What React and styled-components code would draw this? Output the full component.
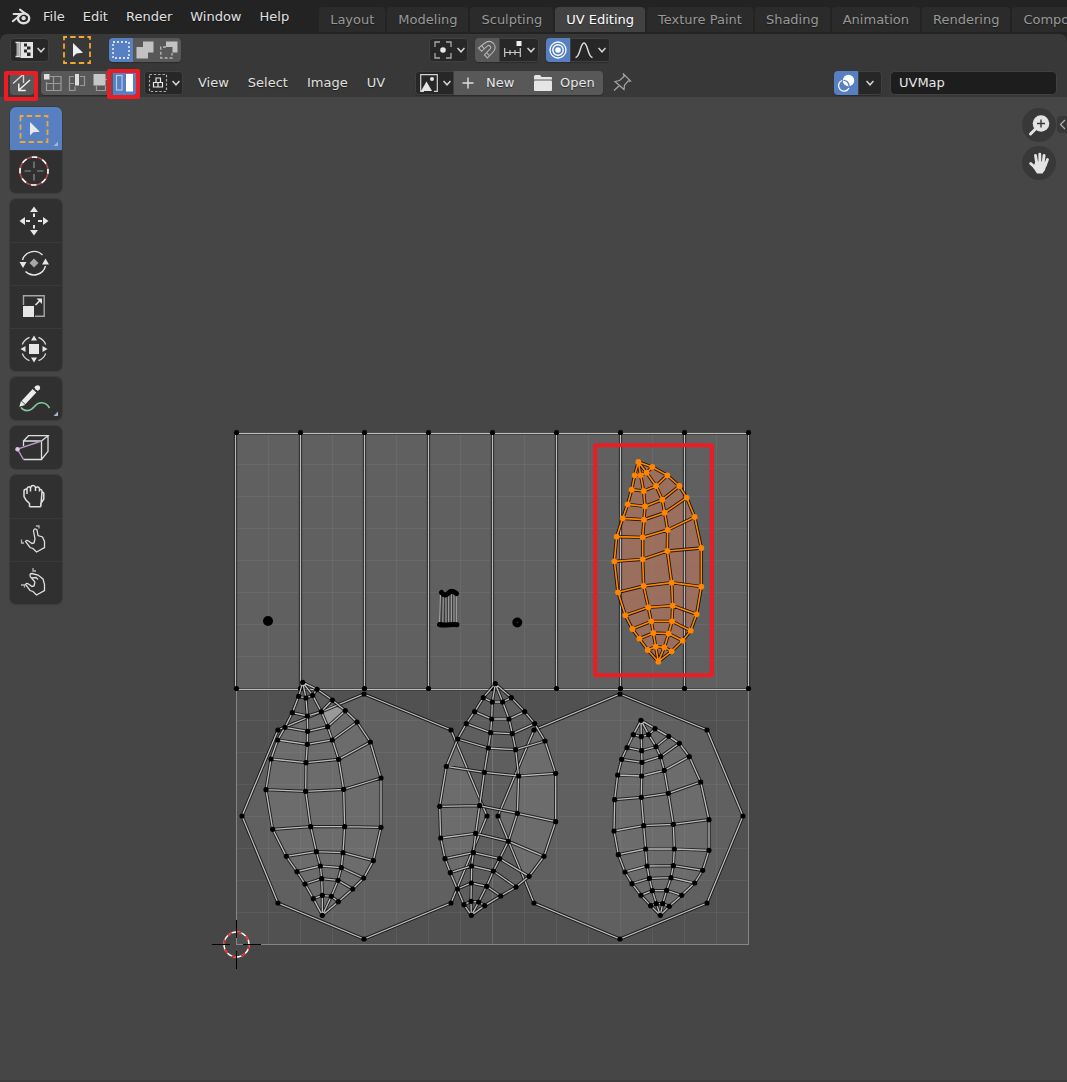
import React from 'react';
import styled, { createGlobalStyle } from 'styled-components';

const GlobalStyle = createGlobalStyle`
  *, *::before, *::after { box-sizing: border-box; }
  html, body { margin: 0; background: #464646; }
  body, button, input {
    font-family: 'DejaVu Sans', Verdana, sans-serif;
    font-size: 13px;
    line-height: 16px;
  }
  svg { display: block; flex: none; }
`;

const Window = styled.div`
  display: flex;
  flex-direction: column;
  height: 100vh;
  overflow: hidden;
  background: #232323;
  color: #e0e0e0;
`;

/* ---------- application bar ---------- */

const TopBar = styled.header`
  display: flex;
  flex: none;
  height: 34px;
  padding: 0 0 2px 11px;
  overflow: hidden;
`;

const PlainButton = styled.button`
  display: flex;
  align-items: center;
  flex: none;
  padding: 0;
  border: 0;
  background: none;
  color: #e0e0e0;
  white-space: nowrap;
  text-shadow: 0 1px 1px rgba(0, 0, 0, 0.5);
`;

const AppMenu = styled.nav`
  display: flex;
  flex: none;
  gap: 18px;
  padding-top: 2px;
`;

const LogoButton = styled(PlainButton)`
  margin-right: 12px;
`;

const Tabs = styled.nav`
  display: flex;
  align-items: flex-end;
  flex: none;
  gap: 2px;
  margin-left: 30px;
`;

const Tab = styled.button`
  flex: none;
  height: 25px;
  padding: 0 11px;
  border: 0;
  border-radius: 4px 4px 0 0;
  background: ${(p) => (p.$active ? '#424242' : '#2b2b2b')};
  color: ${(p) => (p.$active ? '#ffffff' : '#989898')};
  white-space: nowrap;
  text-shadow: 0 1px 1px rgba(0, 0, 0, 0.4);
`;

/* ---------- editor header ---------- */

const EditorHeader = styled.div`
  flex: none;
  border-radius: 7px 7px 0 0;
  background: #383838;
`;

const HeaderRow = styled.div`
  display: flex;
  align-items: center;
  height: ${(p) => (p.$lower ? 31 : 32)}px;
  padding: ${(p) => (p.$lower ? 2 : 0)}px 10px 0;
`;

const Spacer = styled.div`
  flex: ${(p) => p.$grow || 1};
`;

const Cluster = styled.div`
  display: flex;
  align-items: center;
  flex: none;
  gap: ${(p) => p.$gap || 7}px;
`;

const Joined = styled.div`
  display: flex;
  flex: none;
  border-radius: 4px;
  box-shadow: 0 1px 1px rgba(0, 0, 0, 0.25);
  & > *:first-child { border-radius: 4px 0 0 4px; }
  & > *:last-child { border-radius: 0 4px 4px 0; }
  & > *:not(:first-child):not(:last-child) { border-radius: 0; }
  & > * + * { border-left: 1px solid #3b3b3b; }
`;

const tones = { dark: '#272727', grey: '#585858', blue: '#5680c2' };

const ToolButton = styled.button`
  position: relative;
  display: flex;
  align-items: center;
  justify-content: center;
  gap: 4px;
  flex: none;
  width: ${(p) => p.$width || 24}px;
  height: 24px;
  padding: 0;
  border: 0;
  border-radius: 4px;
  background: ${(p) => tones[p.$tone || 'grey']};
  box-shadow: ${(p) => (p.$tone === 'dark' ? 'inset 0 0 0 1px #404040' : 'none')};
  color: #e6e6e6;
  text-shadow: 0 1px 1px rgba(0, 0, 0, 0.5);
`;

const LabelButton = styled(ToolButton)`
  justify-content: flex-start;
  gap: ${(p) => p.$gap}px;
  padding-left: ${(p) => p.$pad}px;
`;

const ActiveTool = styled(PlainButton)`
  margin: 0 11px 0 7px;
`;

const HeaderMenu = styled.nav`
  display: flex;
  gap: 19px;
  margin: 0 30px 0 15px;
`;

const PinButton = styled(PlainButton)`
  margin-left: 10px;
`;

const LayerField = styled.input`
  width: 167px;
  height: 24px;
  margin-left: 8px;
  padding: 0 8px 1px;
  border: 1px solid #404040;
  border-radius: 5px;
  background: #1d1d1d;
  color: #e6e6e6;
  outline: 0;
`;

const Highlight = styled.span`
  position: absolute;
  inset: ${(p) => p.$inset};
  z-index: 1;
  border: 4px solid #ed1c24;
  border-radius: 2px;
  pointer-events: none;
`;

/* ---------- viewport ---------- */

const Viewport = styled.main`
  display: grid;
  grid-template: minmax(0, 1fr) / auto 1fr auto;
  flex: 1;
  min-height: 0;
  background: #464646;
  border-bottom: 2px solid #3d3d3d;
`;

const Drawing = styled.svg`
  grid-area: 1 / 1 / 2 / 4;
  width: 100%;
  height: 100%;
`;

const Shelf = styled.aside`
  grid-area: 1 / 1;
  display: flex;
  flex-direction: column;
  gap: 6px;
  padding: 10px;
  z-index: 1;
`;

const ShelfGroup = styled.div`
  display: flex;
  flex-direction: column;
  border-radius: 6px;
  overflow: hidden;
  box-shadow: 0 0 0 1px #3c3c3c;
`;

const ShelfButton = styled.button`
  width: 52px;
  height: 43px;
  padding: 0;
  border: 0;
  background: ${(p) => (p.$active ? '#5680c2' : '#303030')};
  & + & { box-shadow: inset 0 1px 0 #3a3a3a; }
`;

const Gizmos = styled.aside`
  grid-area: 1 / 3;
  display: flex;
  align-items: flex-start;
  gap: 1px;
  padding-top: 11px;
  z-index: 1;
`;

const GizmoColumn = styled.div`
  display: flex;
  flex-direction: column;
  gap: 4px;
`;

const RoundButton = styled.button`
  width: 34px;
  height: 34px;
  padding: 0;
  border: 0;
  border-radius: 50%;
  background: #383838;
`;

const SidebarTab = styled.button`
  width: 10px;
  height: 17px;
  margin-top: 8px;
  padding: 0;
  border: 0;
  border-radius: 4px 0 0 4px;
  background: #383838;
`;

/* ---------- header icons ---------- */

const Glyph = ({ w = 20, h = 20, children }) => (
  <svg width={w} height={h} viewBox={`0 0 ${w} ${h}`} fill="none" stroke="none" aria-hidden="true">
    {children}
  </svg>
);

const BlenderIcon = () => (
  <Glyph>
    <g stroke="#dedede" strokeWidth="2" strokeLinecap="round" strokeLinejoin="round">
      <path d="M9 3.600 16 8.800M2.600 8H12M1.800 15.200 10.500 8.300" />
      <ellipse cx="12.600" cy="12.300" rx="5.600" ry="4.900" strokeWidth="2.400" />
    </g>
    <circle cx="12.600" cy="12.200" r="2.100" fill="#dedede" />
  </Glyph>
);

const Chevron = () => (
  <Glyph w={8} h={6}>
    <path d="M0.5 1 4 4.800 7.500 1" stroke="#d6d6d6" strokeWidth="1.500" />
  </Glyph>
);

const UVEditorIcon = () => (
  <Glyph w={18} h={18}>
    <path d="M0.5 1.500h4v14h-4M0.5 15.500h5" stroke="#ddd" strokeWidth="1.3" />
    <path d="M1.500 2h3v13h-3z" fill="#aaa" />
    <rect x="5.5" y="1" width="12.500" height="16" fill="#e3e3e3" />
    <path d="M9 2.5h3v3H9zM12 5.5h3.5v3H12zM9 8.5h3v3H9zM12 11.5h3.5v3.5H12z" fill="#272727" />
  </Glyph>
);

const ActiveToolIcon = () => (
  <Glyph w={28} h={28}>
    <rect x="1" y="1" width="26" height="26" stroke="#f0a830" strokeWidth="1.8" strokeDasharray="5.4 3.2" strokeDashoffset="2.4" />
    <path d="M10 7v14l3.4-3.6 6.6-.6z" fill="#f0f0f0" />
  </Glyph>
);

const SelectNewIcon = () => (
  <Glyph>
    <rect x="2" y="2" width="16" height="16" stroke="#fff" strokeWidth="1.3" strokeDasharray="2 2" />
  </Glyph>
);

const SelectExtendIcon = () => (
  <Glyph><path d="M8 1.5h10.5v11H13v6H1.5V7H8z" fill="#c2c2c2" /></Glyph>
);

const SelectSubtractIcon = () => (
  <Glyph>
    <path d="M7 1.5h11.5v11h-5V7H7z" fill="#c2c2c2" />
    <path d="M7 7H1.8v11H13v-5" stroke="#b5b5b5" strokeWidth="1.4" strokeDasharray="3 2" />
  </Glyph>
);

const PivotIcon = () => (
  <Glyph>
    <path d="M2 7V2h5M13 2h5v5M18 13v5h-5M7 18H2v-5" stroke="#aaa" strokeWidth="1.3" />
    <circle cx="10" cy="10" r="2.8" fill="#e8e8e8" />
  </Glyph>
);

const MagnetIcon = () => (
  <Glyph>
    <path d="M1.500 8 7.600 3.200c3-2.300 6.600-2 8.900.3 2.300 2.700 1.900 6-.6 8.700l-5.400 5.800-3.100-3.100 5.500-5.700c1.200-1.300 1-2.400.3-3.100-.8-.8-2-.8-3 .1L4.600 11.300z" stroke="#b4b4b4" strokeWidth="1.100" />
    <path d="M4.600 5.600 7.400 8.800M9.500 12.700l3 3" stroke="#b4b4b4" strokeWidth="1.100" />
  </Glyph>
);

const IncrementIcon = () => (
  <Glyph>
    <path d="M1.700 8v9M17.300 8v9M1.700 12.500h15.600M7 10v5M12 10v5" stroke="#c8c8c8" strokeWidth="1.200" />
    <rect x="13.500" y="1" width="5" height="5" fill="#eee" />
  </Glyph>
);

const ProportionalIcon = () => (
  <Glyph>
    <circle cx="10" cy="10" r="2.800" fill="#fff" />
    <circle cx="10" cy="10" r="5.200" stroke="#fff" strokeWidth="1.400" />
    <circle cx="10" cy="10" r="8" stroke="#fff" strokeWidth="1.300" />
  </Glyph>
);

const FalloffIcon = () => (
  <Glyph><path d="M1.500 17.500C6.500 17 6 3 10 3s3.500 14 8.500 14.500" stroke="#e0e0e0" strokeWidth="1.400" /></Glyph>
);

const SyncIcon = () => (
  <Glyph w={24} h={24}>
    <path d="M3 12.500 13 3.500M13.500 12V3" stroke="#d6d6d6" strokeWidth="1.400" />
    <path d="M20 9 9 19M8.800 12.500v7h7" stroke="#f0f0f0" strokeWidth="1.500" />
  </Glyph>
);

const VertexIcon = () => (
  <Glyph>
    <path d="M7 3.500h11v14H3.500V9M10.500 3.500v14M3.500 10.500H18" stroke="#9a9a9a" strokeWidth="1.200" />
    <rect x="1" y="1" width="5.500" height="5.500" fill="#dedede" />
  </Glyph>
);

const EdgeIcon = () => (
  <Glyph>
    <path d="M7 3.500H2.500v14h5.500v-4M13 3.500h4.500v9H13M2.500 10.500H7" stroke="#9a9a9a" strokeWidth="1.200" />
    <rect x="8" y="1" width="4" height="11.500" fill="#dedede" />
  </Glyph>
);

const FaceIcon = () => (
  <Glyph>
    <path d="M5.500 13v4.500h9V13M14 6.500h5v6" stroke="#9a9a9a" strokeWidth="1.200" />
    <rect x="2.500" y="1" width="12" height="11.500" fill="#c6c6c6" />
  </Glyph>
);

const IslandIcon = () => (
  <Glyph>
    <rect x="1.500" y="2.500" width="5.500" height="14.500" stroke="#b7c9ec" strokeWidth="1.200" />
    <rect x="11" y="1" width="7" height="17.500" fill="#fff" />
  </Glyph>
);

const StickyIcon = () => (
  <Glyph>
    <rect x="1.500" y="1.500" width="17" height="17" stroke="#aaa" strokeWidth="1.200" strokeDasharray="2.500 1.800" />
    <path d="M8 5h4.500v4.500H8zM5.500 9.500H10V14H5.500zM10 9.500h4.500V14H10z" stroke="#e6e6e6" strokeWidth="1.200" />
  </Glyph>
);

const ImageIcon = () => (
  <Glyph>
    <path d="M18.300 6v12.300H15M5 18.300H1.700V1.700h16.600V6" stroke="#d2d2d2" strokeWidth="1.200" />
    <path d="M2 18 7.500 8.500 13 18z" fill="#e6e6e6" />
    <circle cx="13" cy="6" r="2" fill="#e6e6e6" />
  </Glyph>
);

const PlusIcon = () => (
  <Glyph w={12} h={12}><path d="M6 0.500v11M0.500 6h11" stroke="#e0e0e0" strokeWidth="1.400" /></Glyph>
);

const FolderIcon = () => (
  <Glyph w={18} h={18}>
    <path d="M0 5.500V2.500Q0 1 1.500 1H6l1.500 2H17q1 0 1 1v1.500z" fill="#e6e6e6" />
    <rect y="6.500" width="18" height="10.500" rx="1" fill="#e6e6e6" />
  </Glyph>
);

const PinIcon = () => (
  <Glyph w={19} h={19}>
    <path d="M1 17.500 6.500 12.500M2 8.500l4.500-1L11 3.500 10.500 1l7 7-2.500.200-3.500 4L11 16.500z" stroke="#a6a6a6" strokeWidth="1.200" />
  </Glyph>
);

const OverlayIcon = () => (
  <Glyph>
    <circle cx="12.500" cy="7.500" r="5.700" fill="#fff" />
    <path d="M6 7.500A5.500 5.500 0 1 0 13 15" stroke="#fff" strokeWidth="1.300" />
    <path d="M7.500 7.300A5.500 5.500 0 0 1 13 13" stroke="#5680c2" strokeWidth="1.300" />
  </Glyph>
);

/* ---------- shelf icons ---------- */

const ShelfGlyph = ({ children }) => (
  <svg width="52" height="43" viewBox="0 0 52 43" fill="none" aria-hidden="true">{children}</svg>
);

const Corner = () => <path d="M43.500 39H48v-4.500z" fill="#a9b4c6" />;

const shelfIcons = {
  'Select Box': (
    <>
      <rect x="10.500" y="9" width="27" height="26" stroke="#f0a830" strokeWidth="1.800" strokeDasharray="5.400 3.200" strokeDashoffset="2.400" />
      <path d="M20 15v13.500l3.300-3.200 6.500-.5z" fill="#e8e8e8" />
      <Corner />
    </>
  ),
  Cursor: (
    <>
      <circle cx="24" cy="21" r="14" stroke="#ad4a4e" strokeWidth="1.600" />
      <circle cx="24" cy="21" r="14" stroke="#fff" strokeWidth="1.600" strokeDasharray="5.500 5.500" strokeDashoffset="2.700" />
      <path d="M14.500 21h6.500M27 21h6.500M24 11.500V18M24 24v6.500" stroke="#8f8f8f" strokeWidth="1.200" />
    </>
  ),
  Move: (
    <>
      <path d="M24 7.500l4 5.500h-8zM24 36.500l4-5.500h-8zM9.500 22l5.500-4v8zM38.500 22 33 18v8z" fill="#e6e6e6" />
      <path d="M24 14.500V18M24 26v3.500M16 22h4M28 22h4" stroke="#e6e6e6" strokeWidth="2" />
    </>
  ),
  Rotate: (
    <>
      <path d="M12.500 18A12 12 0 0 1 32.500 13M35.500 24A12 12 0 0 1 15.500 29.500" stroke="#e6e6e6" strokeWidth="1.400" />
      <path d="M9.500 20h7L13 26zM32 22.500h7l-3.500-6z" fill="#e6e6e6" />
      <path d="M24 16.500l4.500 4.500-4.500 4.500-4.500-4.500z" fill="#a8a8a8" />
    </>
  ),
  Scale: (
    <>
      <path d="M13.500 20v-9.300h20.700v20.600H25" stroke="#a6a6a6" strokeWidth="1.400" />
      <rect x="13" y="21" width="11" height="11" fill="#e6e6e6" />
      <path d="M25.500 20l4-4" stroke="#e6e6e6" strokeWidth="1.600" />
      <path d="M26.500 13.500H32V19z" fill="#e6e6e6" />
    </>
  ),
  Transform: (
    <>
      <path d="M28.500 9.300A12.500 12.500 0 0 1 35.700 16.500M35.700 25.500A12.500 12.500 0 0 1 28.500 32.700M19.500 32.700A12.500 12.500 0 0 1 12.300 25.500M12.300 16.500A12.500 12.500 0 0 1 19.500 9.300" stroke="#d8d8d8" strokeWidth="1.300" />
      <rect x="19" y="16" width="10" height="10" fill="#e6e6e6" />
      <path d="M24 7.500l3 5h-6zM24 34.500l3-5h-6zM10.500 21l5-3v6zM37.500 21l-5-3v6z" fill="#e6e6e6" />
    </>
  ),
  Annotate: (
    <>
      <path d="M13.500 25.500 24.500 13.700" stroke="#ececec" strokeWidth="5" />
      <path d="M26 12.200l1.400-1.500" stroke="#ececec" strokeWidth="5" />
      <circle cx="27.600" cy="10.700" r="2.500" fill="#ececec" />
      <path d="M9.300 29.800l1.700-5.800 4.200 4z" fill="#ececec" />
      <path d="M11 30.500c3.500 4.500 9.500 4 13.500-1s11-5.500 15 1.500" stroke="#7fcb9d" strokeWidth="1.600" />
      <Corner />
    </>
  ),
  'Rip Region': (
    <>
      <path d="M13.500 20v-5h18v18.500h-18M13.500 15l5-5.300H38l-6.500 5.300M38 9.700v15.600l-6.500 8.200" stroke="#dedede" strokeWidth="1.300" />
      <path d="M13.500 33.500 7.500 23.200 31.500 15" stroke="#b596c4" strokeWidth="1.400" />
      <circle cx="7.500" cy="23.200" r="2.200" fill="#dcc3ea" />
    </>
  ),
  Grab: (
    <path d="M19.500 31.700V28.500l-3.500-3.500-2-3.500V16q0-2 3-2M17 19v-5.500q.500-1.800 3-1.800M20.500 16.500V13q.500-2.500 2.500-2.500t2.500 2v3.500M25.500 12.500q3-1.500 4 1v3M29.500 14.500q2.500-.5 2.500 2v2M32 17q1.800 0 1.800 2V24l-3 4.500v3.200z M19.500 31.700h11.300" stroke="#e0e0e0" strokeWidth="1.500" />
  ),
  Relax: (
    <>
      <path d="M25 21l-1.500-8q.500-3.500 3.500-1l1 5.500 4.500 1.500 2 4.500v6L26.500 34l-3.500-3.500-3-1-4.500-6q1-2 3-.5l3.500 2.500 2-.500L25 21" stroke="#dedede" strokeWidth="1.300" />
      <path d="M26 8h3v2.500M11.500 21.500V25H14" stroke="#b5b5b5" strokeWidth="1.300" />
    </>
  ),
  Pinch: (
    <>
      <path d="M25 21l-4.500-5q-1.500-3.500 1.500-3.500l6 1.500 5 4 1.500 5.500v6L26.500 34l-3.500-3.500-3-1-4.500-6q1-2 3-.5l3.500 2.500 2-.500L25 21M22 17l4-.5 2 2" stroke="#dedede" strokeWidth="1.300" />
      <path d="M23 7v3h3M11 24h3.500v2.500" stroke="#b5b5b5" strokeWidth="1.300" />
    </>
  ),
};

const shelfGroups = [
  ['Select Box', 'Cursor'],
  ['Move', 'Rotate', 'Scale', 'Transform'],
  ['Annotate'],
  ['Rip Region'],
  ['Grab', 'Relax', 'Pinch'],
];

/* ---------- UV layout data ---------- */

// Every island is a strip of rings between two poles; its points count in thirds of a pixel from `at`.
const leaves = [
  {
    at: [220, 670], top: [248, 37], bottom: [307, 736],
    rings: [
      [[236, 79], [258, 84], [278, 76], [291, 58]],
      [[217, 128], [262, 138], [304, 125], [337, 90]],
      [[195, 172], [263, 184], [323, 170], [376, 122]],
      [[173, 210], [262, 223], [337, 210], [411, 156]],
      [[153, 267], [258, 278], [356, 268], [451, 216]],
      [[138, 359], [257, 364], [371, 358], [483, 324]],
      [[158, 478], [272, 470], [374, 470], [483, 472]],
      [[199, 559], [289, 545], [369, 548], [460, 572]],
      [[231, 605], [301, 588], [364, 593], [431, 624]],
      [[255, 642], [305, 626], [354, 631], [398, 657]],
      [[280, 686], [307, 676], [334, 679], [355, 695]],
    ],
  },
  {
    at: [420, 670], top: [226, 41], bottom: [154, 736],
    rings: [
      [[190, 83], [217, 96], [248, 96], [274, 83]],
      [[164, 125], [215, 147], [267, 147], [314, 125]],
      [[139, 161], [212, 188], [277, 191], [344, 161]],
      [[113, 207], [205, 234], [287, 239], [375, 213]],
      [[79, 289], [193, 307], [296, 318], [407, 310]],
      [[59, 409], [179, 407], [292, 430], [407, 455]],
      [[62, 504], [167, 490], [265, 514], [372, 559]],
      [[75, 566], [160, 548], [239, 566], [327, 619]],
      [[91, 608], [155, 588], [220, 603], [288, 651]],
      [[112, 657], [154, 639], [200, 649], [242, 678]],
      [[132, 704], [153, 694], [176, 696], [194, 707]],
    ],
  },
  {
    at: [590, 680], top: [153, 121], bottom: [211, 706],
    rings: [
      [[130, 164], [154, 170], [176, 164], [195, 146]],
      [[111, 203], [155, 212], [198, 200], [236, 169]],
      [[95, 238], [156, 247], [212, 230], [268, 190]],
      [[83, 285], [155, 288], [223, 271], [298, 230]],
      [[74, 359], [154, 352], [235, 340], [332, 306]],
      [[72, 453], [161, 437], [250, 433], [357, 419]],
      [[85, 524], [167, 507], [253, 507], [357, 511]],
      [[105, 576], [171, 558], [250, 557], [338, 571]],
      [[126, 611], [178, 595], [243, 593], [314, 609]],
      [[153, 646], [187, 632], [230, 631], [275, 646]],
      [[182, 677], [199, 671], [218, 671], [238, 679]],
    ],
  },
  {
    at: [590, 430], top: [145, 96], bottom: [205, 695], selected: true,
    rings: [
      [[134, 136], [152, 136], [170, 128], [187, 111]],
      [[125, 179], [161, 183], [198, 168], [232, 136]],
      [[113, 223], [165, 229], [217, 209], [268, 168]],
      [[98, 265], [162, 269], [224, 248], [290, 203]],
      [[80, 320], [158, 322], [233, 300], [314, 261]],
      [[73, 394], [158, 388], [232, 363], [334, 354]],
      [[84, 487], [161, 468], [245, 458], [334, 470]],
      [[106, 556], [175, 532], [248, 527], [320, 553]],
      [[127, 597], [184, 574], [246, 574], [302, 602]],
      [[148, 626], [190, 609], [236, 611], [278, 632]],
      [[173, 660], [197, 650], [223, 652], [245, 664]],
    ],
  },
];

const octagons = [364, 620].map((cx) => [
  [cx, 694], [cx + 87, 730], [cx + 123, 816], [cx + 87, 903],
  [cx, 939], [cx - 86, 903], [cx - 122, 816], [cx - 86, 730],
]);

const path = (points, close) => `M${points.map((p) => p.join(' ')).join('L')}${close ? 'Z' : ''}`;

const place = (leaf) => {
  const move = ([x, y]) => [leaf.at[0] + x / 3, leaf.at[1] + y / 3];
  const rings = leaf.rings.map((ring) => ring.map(move));
  const top = move(leaf.top);
  const bottom = move(leaf.bottom);
  const columns = [0, 1, 2, 3].map((i) => [top, ...rings.map((r) => r[i]), bottom]);
  return { selected: leaf.selected, rings, top, bottom, columns };
};

const placed = leaves.map(place);

const Edges = ({ d, selected }) => (
  <g fill="none">
    <path d={d} stroke="#000" strokeOpacity={selected ? 0.8 : 0.7} strokeWidth={selected ? 3.4 : 3.2} />
    <path d={d} stroke={selected ? '#ff8500' : '#bcbcbc'} strokeWidth={selected ? 1.6 : 1.3} />
  </g>
);

const Vertices = ({ points, selected }) =>
  points.map(([x, y], i) => <circle key={i} cx={x} cy={y} r={selected ? 2.9 : 2.6} fill={selected ? '#ff8500' : '#000'} />);

const LeafFace = ({ leaf }) => (
  <path
    d={path([...leaf.columns[0], ...leaf.columns[3].slice().reverse()], true)}
    fill={leaf.selected ? '#b9765d' : '#fff'}
    fillOpacity={leaf.selected ? 0.66 : 0.08}
  />
);

const LeafWire = ({ leaf }) => (
  <g>
    <Edges selected={leaf.selected} d={[...leaf.columns, ...leaf.rings].map((l) => path(l)).join('')} />
    <Vertices selected={leaf.selected} points={[leaf.top, ...leaf.rings.flat(), leaf.bottom]} />
  </g>
);

const columnsX = [0, 1, 2, 3, 4, 5, 6, 7, 8].map((i) => 236 + i * 64);
const gridSteps = Array.from({ length: 15 }, (_, i) => i + 1);

const UVCanvas = () => (
  <Drawing role="img" aria-label="UV layout">
    <g transform="translate(0 -97)">
      <rect x="236.500" y="432.500" width="512" height="512" fill="#515151" stroke="#858585" />
      <rect x="236" y="433" width="512" height="256" fill="#606060" />
      {octagons.map((o, i) => <path key={i} d={path(o, true)} fill="#606060" />)}
      {gridSteps.map((i) => (
        <path
          key={i}
          d={`M${236.5 + i * 32} 433V944M237 ${432.5 + i * 32}H748`}
          stroke="#fff"
          strokeOpacity={i % 8 === 0 ? 0.14 : 0.055}
        />
      ))}
      {placed.map((leaf, i) => <LeafFace key={i} leaf={leaf} />)}
      <path d="M321.500 711.500 332 705l13.500 6-18 15.500z" fill="#999" />

      <Edges d={columnsX.map((x) => `M${x === 236 ? 235.5 : x + 0.5} 433V689`).join('') + 'M236 433.500H748M236 689.500H748'} />
      <Vertices points={columnsX.flatMap((x) => [[x + 0.5, 432.5], [x + 0.5, 688.5]])} />
      {octagons.map((o, i) => (
        <g key={i}>
          <Edges d={path(o, true)} />
          <Vertices points={o} />
        </g>
      ))}
      {placed.map((leaf, i) => <LeafWire key={i} leaf={leaf} />)}

      <circle cx="268" cy="621" r="5" fill="#000" />
      <circle cx="517.300" cy="622.500" r="5" fill="#000" />
      <circle cx="517.300" cy="622.500" r="0.700" fill="#444" />
      <path d="M440 592h17v32h-18z" fill="#3c3c3c" />
      <path d="M440.500 594l-1 30M443.300 594l-.5 30M446 594v30M448.700 594v30M451.300 594v30M454 594v30M456.300 594v30" stroke="#aaa" strokeWidth="1.100" />
      <path d="M441.500 592.500c3 4 5 2.500 7 .500s4.500-2.500 8 .500M439.500 624.500c5 1.500 12-.500 17.500.200" stroke="#000" strokeWidth="5" strokeLinecap="round" fill="none" />

      <rect x="595.300" y="445.300" width="116.500" height="230" fill="none" stroke="#ed1c24" strokeWidth="4" strokeLinejoin="round" />

      <circle cx="236.500" cy="944.500" r="12.500" fill="none" stroke="#fff" strokeWidth="1.500" />
      <circle cx="236.500" cy="944.500" r="12.500" fill="none" stroke="#f01c1c" strokeWidth="1.500" strokeDasharray="4.900 4.900" />
      <path d="M212 944.500h18M243 944.500h18M236.500 920v18M236.500 951v18" stroke="#000" />
    </g>
  </Drawing>
);

/* ---------- page ---------- */

const appMenus = ['File', 'Edit', 'Render', 'Window', 'Help'];
const workspaces = ['Layout', 'Modeling', 'Sculpting', 'UV Editing', 'Texture Paint', 'Shading', 'Animation', 'Rendering', 'Compositing'];
const editorMenus = ['View', 'Select', 'Image', 'UV'];

const IconMenu = ({ label, icon, width = 39 }) => (
  <ToolButton $tone="dark" $width={width} aria-label={label} aria-haspopup="menu">
    {icon}
    <Chevron />
  </ToolButton>
);

export default function App() {
  return (
    <>
      <GlobalStyle />
      <Window>
        <TopBar>
          <LogoButton aria-label="Blender"><BlenderIcon /></LogoButton>
          <AppMenu aria-label="Application">
            {appMenus.map((m) => <PlainButton key={m}>{m}</PlainButton>)}
          </AppMenu>
          <Tabs aria-label="Workspaces">
            {workspaces.map((w) => <Tab key={w} $active={w === 'UV Editing'}>{w}</Tab>)}
          </Tabs>
        </TopBar>

        <EditorHeader>
          <HeaderRow>
            <Cluster>
              <IconMenu label="Editor type" icon={<UVEditorIcon />} />
              <ActiveTool aria-label="Active tool"><ActiveToolIcon /></ActiveTool>
              <Joined>
                <ToolButton $tone="blue" aria-label="New selection"><SelectNewIcon /></ToolButton>
                <ToolButton aria-label="Extend selection"><SelectExtendIcon /></ToolButton>
                <ToolButton aria-label="Subtract selection"><SelectSubtractIcon /></ToolButton>
              </Joined>
            </Cluster>
            <Spacer $grow={5} />
            <Cluster>
              <IconMenu label="Pivot point" icon={<PivotIcon />} />
              <Joined>
                <ToolButton aria-label="Snap"><MagnetIcon /></ToolButton>
                <IconMenu label="Snap to" width={40} icon={<IncrementIcon />} />
              </Joined>
              <Joined>
                <ToolButton $tone="blue" aria-label="Proportional editing"><ProportionalIcon /></ToolButton>
                <IconMenu label="Falloff" width={40} icon={<FalloffIcon />} />
              </Joined>
            </Cluster>
            <Spacer $grow={9} />
          </HeaderRow>

          <HeaderRow $lower>
            <Cluster>
              <ToolButton aria-label="Sync selection">
                <SyncIcon />
                <Highlight $inset="0 -4px -6px -6px" />
              </ToolButton>
              <Joined>
                <ToolButton aria-label="Vertex"><VertexIcon /></ToolButton>
                <ToolButton aria-label="Edge"><EdgeIcon /></ToolButton>
                <ToolButton aria-label="Face"><FaceIcon /></ToolButton>
                <ToolButton $tone="blue" aria-label="Island">
                  <IslandIcon />
                  <Highlight $inset="-2px -3px -4px -6px" />
                </ToolButton>
              </Joined>
              <IconMenu label="Sticky selection" icon={<StickyIcon />} />
            </Cluster>
            <HeaderMenu aria-label="Editor">
              {editorMenus.map((m) => <PlainButton key={m}>{m}</PlainButton>)}
            </HeaderMenu>
            <Joined>
              <IconMenu label="Browse image" icon={<ImageIcon />} />
              <LabelButton $width={74} $pad={8} $gap={12}><PlusIcon />New</LabelButton>
              <LabelButton $width={75} $pad={6} $gap={8}><FolderIcon />Open</LabelButton>
            </Joined>
            <PinButton aria-label="Pin"><PinIcon /></PinButton>
            <Spacer />
            <Joined>
              <ToolButton $tone="blue" aria-label="Show overlays"><OverlayIcon /></ToolButton>
              <ToolButton $tone="dark" aria-label="Overlay options"><Chevron /></ToolButton>
            </Joined>
            <LayerField aria-label="Active UV map" defaultValue="UVMap" />
          </HeaderRow>
        </EditorHeader>

        <Viewport>
          <UVCanvas />
          <Shelf aria-label="Tools">
            {shelfGroups.map((group) => (
              <ShelfGroup key={group[0]}>
                {group.map((name) => (
                  <ShelfButton key={name} aria-label={name} $active={name === 'Select Box'}>
                    <ShelfGlyph>{shelfIcons[name]}</ShelfGlyph>
                  </ShelfButton>
                ))}
              </ShelfGroup>
            ))}
          </Shelf>
          <Gizmos aria-label="Navigation">
            <GizmoColumn>
              <RoundButton aria-label="Zoom">
                <Glyph w={34} h={34}>
                  <path d="M8.500 26 14 20.500" stroke="#e3e3e3" strokeWidth="3" strokeLinecap="round" />
                  <circle cx="19" cy="15.500" r="8.300" fill="#e3e3e3" />
                  <path d="M19 11.500v8M15 15.500h8" stroke="#383838" strokeWidth="1.400" />
                </Glyph>
              </RoundButton>
              <RoundButton aria-label="Pan">
                <Glyph w={34} h={34}>
                  <path d="M13.500 9.500l1.500 9M17.800 8.300v9M22.100 9.500 21 18M25.500 13.500l-2.500 6.500M8.700 17.500l4.300 4" stroke="#e3e3e3" strokeWidth="2.900" strokeLinecap="round" />
                  <path d="M13.500 15.500h9l1.800 4-1.300 4.500-2.500 3.500h-5.500L11 21.500z" fill="#e3e3e3" />
                </Glyph>
              </RoundButton>
            </GizmoColumn>
            <SidebarTab aria-label="Show sidebar">
              <Glyph w={10} h={17}><path d="M8 4 3.500 8.500 8 13" stroke="#b0b0b0" strokeWidth="1.300" /></Glyph>
            </SidebarTab>
          </Gizmos>
        </Viewport>
      </Window>
    </>
  );
}
